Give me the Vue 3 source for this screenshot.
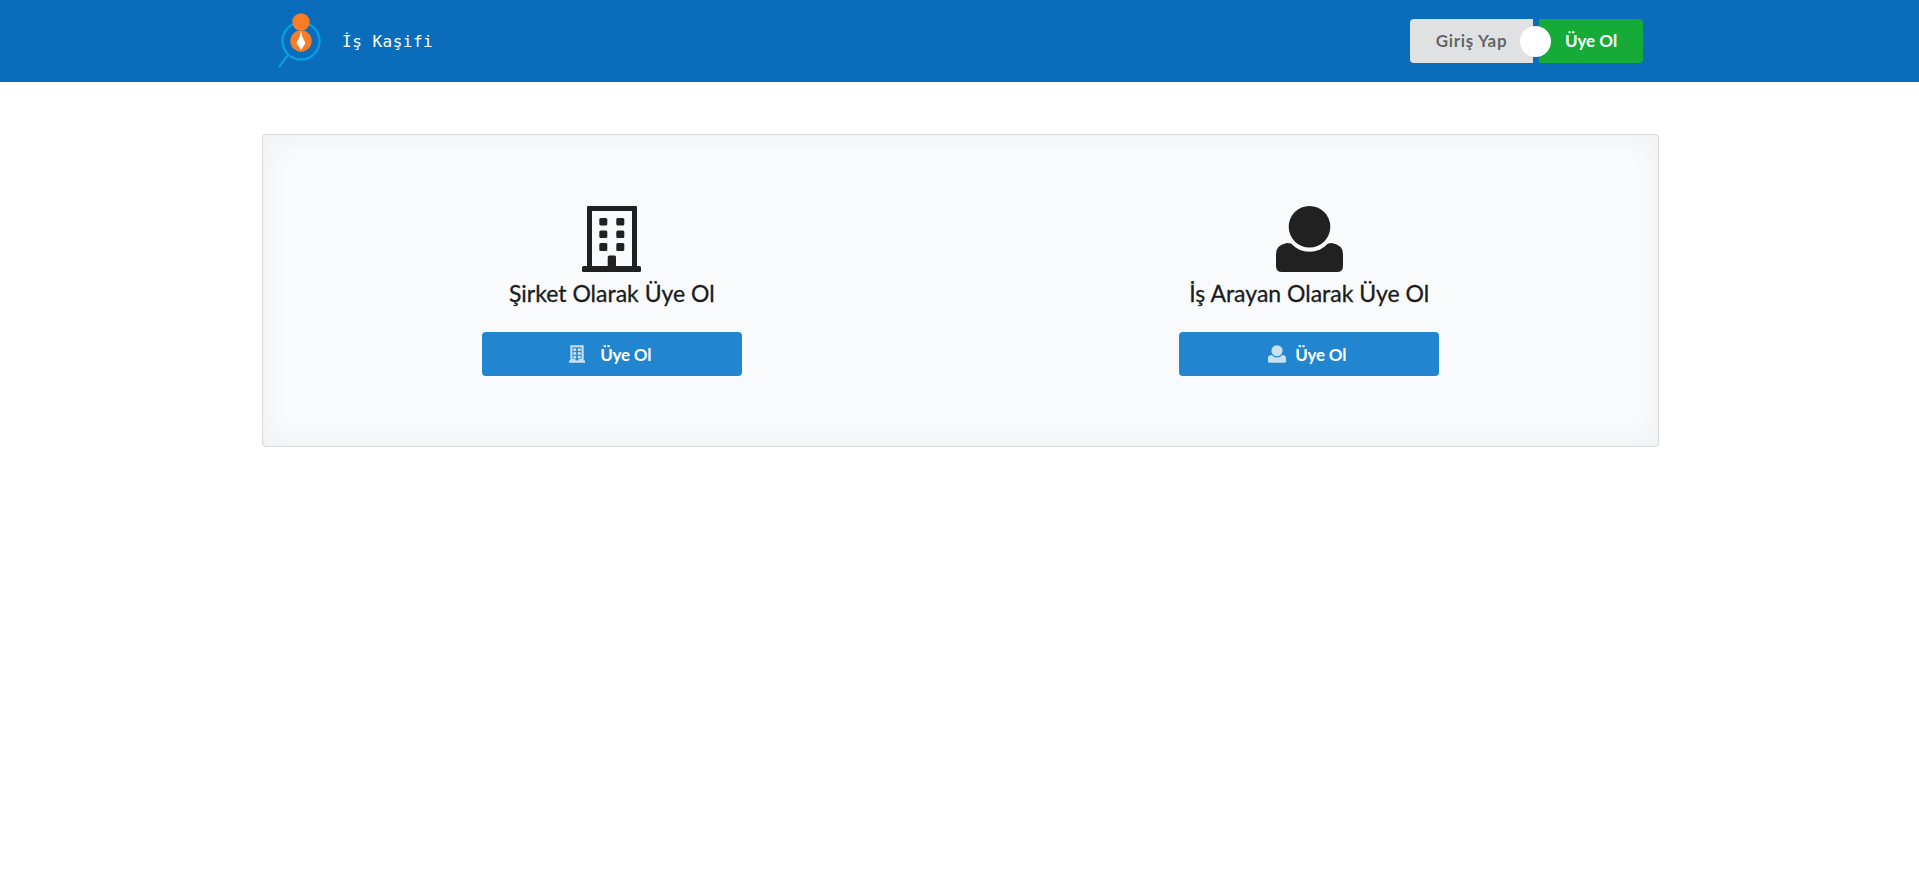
<script setup>
const cards = [
  { key: 'company', title: 'Şirket Olarak Üye Ol', gap: 'wide' },
  { key: 'person', title: 'İş Arayan Olarak Üye Ol', gap: 'narrow' }
]
</script>

<template>
  <div class="page">
    <header class="topbar">
      <div class="container bar-inner">
        <div class="brand">
          <svg class="logo" viewBox="0 0 48 60" aria-hidden="true">
            <circle cx="25" cy="30" r="18.5" fill="none" stroke="#0b9be0" stroke-width="2.4" />
            <line x1="12" y1="44" x2="3.5" y2="55.5" stroke="#0b9be0" stroke-width="2.2" stroke-linecap="round" />
            <circle cx="25" cy="30" r="10.7" fill="#fb7c26" />
            <circle cx="25" cy="11" r="8.7" fill="#fb7c26" />
            <path d="M25 20 L26.5 26 L29.5 32 L25 39 L20.5 32 L23.5 26 Z" fill="#fff" />
          </svg>
          <span class="brand-name">İş Kaşifi</span>
        </div>
        <div class="auth-group">
          <button class="auth-btn login">Giriş Yap</button>
          <button class="auth-btn signup">Üye Ol</button>
          <span class="auth-or"></span>
        </div>
      </div>
    </header>

    <main class="container">
      <section class="panel">
        <div v-for="card in cards" :key="card.key" class="option">
          <svg v-if="card.key === 'company'" class="big-icon" viewBox="0 0 60 66" aria-hidden="true">
            <path fill-rule="evenodd" d="M5 1a1 1 0 0 1 1-1h48a1 1 0 0 1 1 1v60H5ZM10 5v55h15.7V51a1.5 1.5 0 0 1 1.5-1.5h5.3a1.5 1.5 0 0 1 1.5 1.5v9H50V5Z" fill="#212121" />
            <rect x="0" y="60" width="59" height="6" rx="1.5" fill="#212121" />
            <g fill="#212121">
              <rect x="17.3" y="12" width="8" height="7.5" rx="1.5" />
              <rect x="34.3" y="12" width="8" height="7.5" rx="1.5" />
              <rect x="17.3" y="24.6" width="8" height="7.5" rx="1.5" />
              <rect x="34.3" y="24.6" width="8" height="7.5" rx="1.5" />
              <rect x="17.3" y="37" width="8" height="8" rx="1.5" />
              <rect x="34.3" y="37" width="8" height="8" rx="1.5" />
            </g>
          </svg>
          <svg v-else class="big-icon" viewBox="0 0 67 66" aria-hidden="true">
            <circle cx="33.5" cy="20.8" r="20.8" fill="#212121" />
            <path d="M0 48Q0 39 11 37L15 37.6A25 25 0 0 0 52 37.6L56 37Q67 39 67 48V60Q67 66 61 66H6Q0 66 0 60Z" fill="#212121" />
          </svg>
          <h3 class="option-title">{{ card.title }}</h3>
          <button class="signup-btn" :class="card.gap">
            <svg v-if="card.key === 'company'" class="small-icon" viewBox="0 0 60 66" aria-hidden="true">
              <path fill-rule="evenodd" d="M5 0h50v60H5ZM13 8v44h11v8h12v-8h11V8Z" fill="#fff" />
              <rect x="0" y="57" width="60" height="9" fill="#fff" />
              <g fill="#fff">
                <rect x="16" y="12" width="11" height="10" />
                <rect x="33" y="12" width="11" height="10" />
                <rect x="16" y="26" width="11" height="10" />
                <rect x="33" y="26" width="11" height="10" />
                <rect x="16" y="40" width="11" height="10" />
                <rect x="33" y="40" width="11" height="10" />
              </g>
            </svg>
            <svg v-else class="small-icon person" viewBox="0 0 67 66" aria-hidden="true">
              <circle cx="33.5" cy="20.8" r="20.8" fill="#fff" />
              <path d="M0 48Q0 39 11 37L15 37.6A25 25 0 0 0 52 37.6L56 37Q67 39 67 48V60Q67 66 61 66H6Q0 66 0 60Z" fill="#fff" />
            </svg>
            <span>Üye Ol</span>
          </button>
        </div>
      </section>
    </main>
  </div>
</template>

<style scoped>
.page {
  min-height: 872px;
  background: #fff;
  font-family: Lato, "Noto Sans", sans-serif;
  color: #1b1c1d;
}
.container {
  width: 1397px;
  margin-left: 262px;
}
.topbar {
  height: 82px;
  background: #096dbb;
}
.bar-inner {
  height: 82px;
  display: flex;
  align-items: center;
  justify-content: space-between;
  padding: 0 16px 0 14px;
  box-sizing: border-box;
}
.brand {
  display: flex;
  align-items: center;
  gap: 18px;
}
.logo {
  width: 48px;
  height: 60px;
  display: block;
}
.brand-name {
  font-family: "DejaVu Sans Mono", "Liberation Mono", monospace;
  font-size: 16px;
  letter-spacing: 0.5px;
  color: #fff;
}
.auth-group {
  position: relative;
  display: flex;
  gap: 6px;
  height: 44px;
}
.auth-btn {
  border: 0;
  padding: 0;
  font-family: inherit;
  font-size: 17px;
  font-weight: 700;
  line-height: 44px;
}
.login {
  width: 123px;
  background: #e0e1e2;
  color: rgba(0, 0, 0, 0.58);
  border-radius: 4px 0 0 4px;
  letter-spacing: 0.65px;
}
.signup {
  width: 104px;
  background: #16ab39;
  color: #fff;
  border-radius: 0 4px 4px 0;
}
.auth-or {
  position: absolute;
  left: 110px;
  top: 6.5px;
  width: 31px;
  height: 31px;
  border-radius: 50%;
  background: #fff;
}
.panel {
  margin-top: 52px;
  height: 313px;
  box-sizing: border-box;
  display: grid;
  grid-template-columns: 1fr 1fr;
  padding: 71px 0;
  background: #f9fafb;
  border: 1px solid rgba(34, 36, 38, 0.15);
  border-radius: 4px;
  box-shadow: inset 0 0 28px rgba(34, 36, 38, 0.05);
}
.option {
  display: flex;
  flex-direction: column;
  align-items: center;
}
.big-icon {
  display: block;
  height: 66px;
  width: auto;
}
.option-title {
  margin: 4px 0 0;
  height: 34px;
  font-size: 23px;
  line-height: 34px;
  font-weight: 400;
  color: #1b1c1d;
  -webkit-text-stroke: 0.3px #1b1c1d;
}
.signup-btn {
  margin-top: 22px;
  width: 260px;
  height: 44px;
  border: 0;
  border-radius: 4px;
  background: #2185d0;
  color: #fff;
  font-family: inherit;
  font-size: 17px;
  font-weight: 700;
  letter-spacing: -0.2px;
  display: flex;
  align-items: center;
  justify-content: center;
}
.signup-btn.wide {
  gap: 15px;
  padding: 0 3px 0 0;
}
.signup-btn.narrow {
  gap: 9px;
  padding: 0 4px 0 0;
}
.small-icon {
  width: 16px;
  height: 18px;
  opacity: 0.75;
  display: block;
}
.small-icon.person {
  width: 18px;
}
</style>

<style>
html, body { margin: 0; background: #fff; }
</style>
